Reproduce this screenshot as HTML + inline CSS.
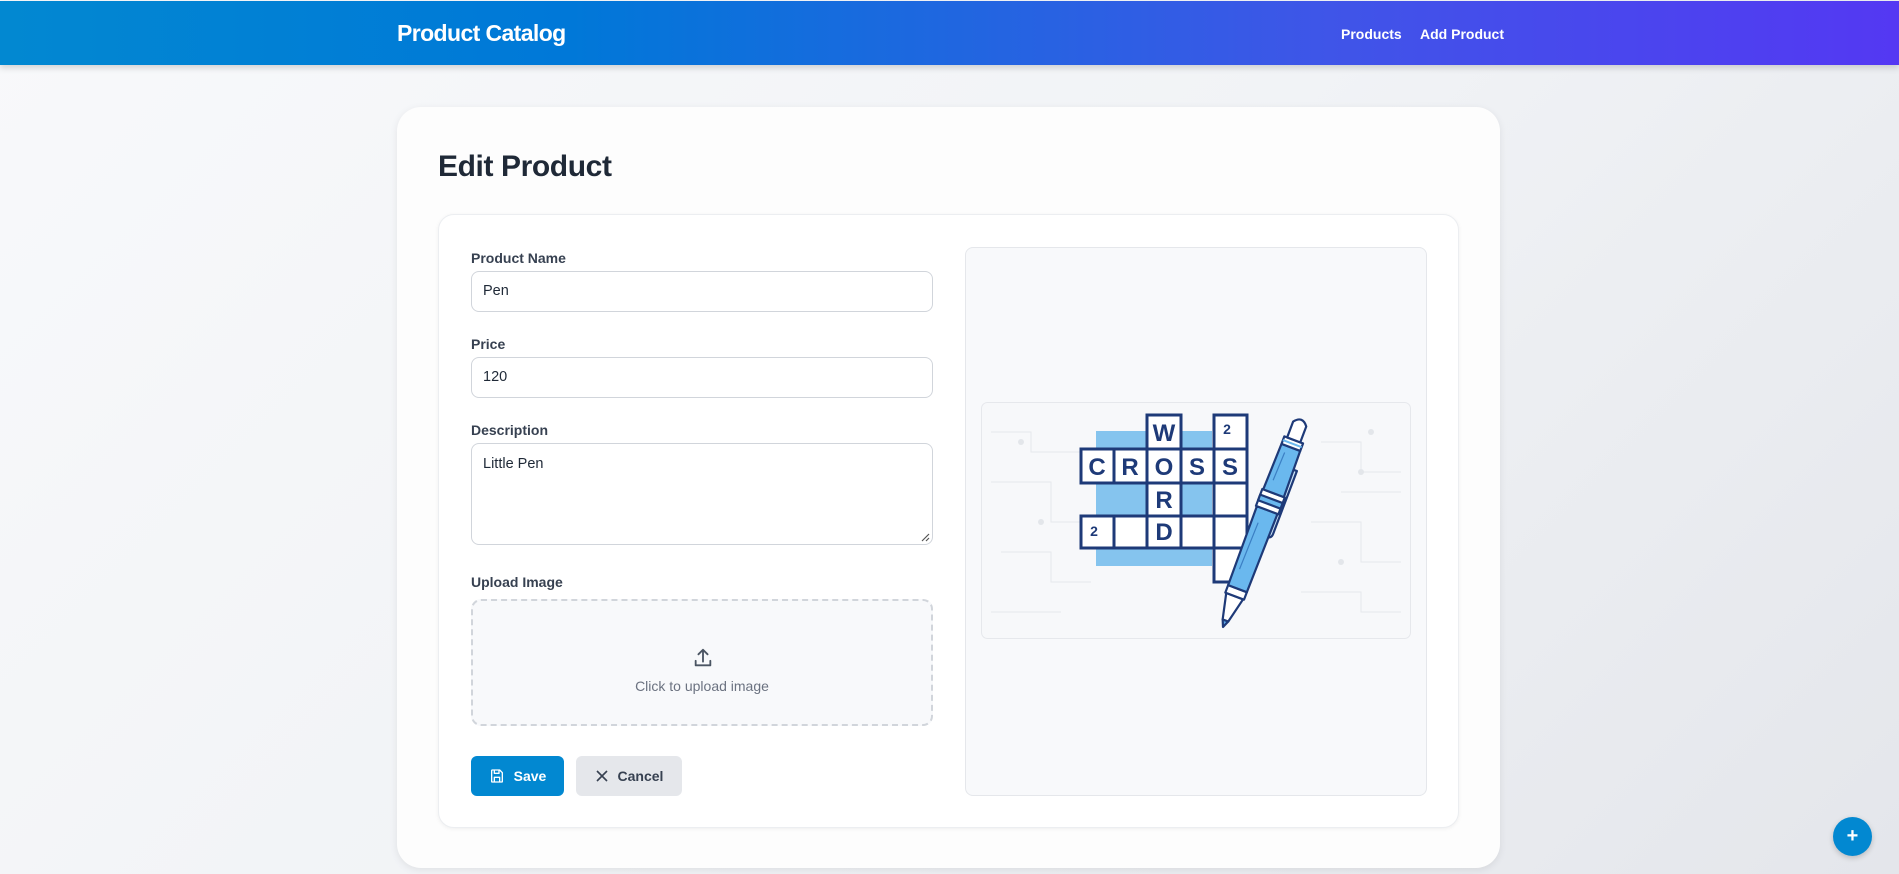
<!DOCTYPE html>
<html><head><meta charset="utf-8">
<style>
*{box-sizing:border-box;margin:0;padding:0}
html,body{width:1899px;height:874px;overflow:hidden}
body{font-family:"Liberation Sans",sans-serif;background:linear-gradient(135deg,#f8f9fb 0%,#f1f3f6 50%,#e4e6eb 100%);position:relative;color:#1f2937}
.hdr{position:absolute;left:0;top:1px;width:1899px;height:64px;background:linear-gradient(90deg,#0288d1 0%,#0078d8 30%,#3f55e8 70%,#5438f3 100%);box-shadow:0 3px 6px rgba(0,0,0,.15)}
.hdr .t{position:absolute;left:397px;top:19px;color:#fff;font-weight:bold;font-size:23px;letter-spacing:-.6px}
.hdr .n{position:absolute;top:25px;color:#fff;font-weight:bold;font-size:14px}
.card{position:absolute;left:397px;top:107px;width:1103px;height:761px;background:#fdfdfd;border-radius:24px;box-shadow:0 2px 8px rgba(0,0,0,.08)}
h1{position:absolute;left:438px;top:150px;font-size:30px;font-weight:bold;color:#1f2937;letter-spacing:-.4px}
.inner{position:absolute;left:438px;top:214px;width:1021px;height:614px;background:#fff;border-radius:16px;border:1px solid #eceef1;box-shadow:0 1px 4px rgba(0,0,0,.06)}
.lbl{position:absolute;left:471px;font-size:14px;font-weight:bold;color:#374151}
.inp{position:absolute;left:471px;width:462px;border:1px solid #d1d5db;border-radius:8px;background:#fff;font-size:14.5px;color:#1f2937;padding-left:11px}
.drop{position:absolute;left:471px;top:599px;width:462px;height:127px;border:2px dashed #d1d5db;border-radius:10px;background:#f8f9fb}
.btn{position:absolute;top:756px;height:40px;border-radius:6px;font-size:14px;font-weight:bold;display:flex;align-items:center;justify-content:center;gap:9px}
.prev{position:absolute;left:965px;top:247px;width:462px;height:549px;background:#f8f9fb;border:1px solid #e5e7eb;border-radius:8px}
.fab{position:absolute;left:1833px;top:817px;width:39px;height:39px;border-radius:50%;background:#0288d1;color:#fff;font-size:20px;font-weight:bold;text-align:center;line-height:39px;box-shadow:0 2px 6px rgba(0,0,0,.2)}
</style></head><body>
<div class="hdr"><div class="t">Product Catalog</div><div class="n" style="left:1341px">Products</div><div class="n" style="left:1420px">Add Product</div></div>
<div class="card"></div>
<h1>Edit Product</h1>
<div class="inner"></div>
<div class="lbl" style="top:250px">Product Name</div>
<div class="inp" style="top:271px;height:41px;line-height:39px">Pen</div>
<div class="lbl" style="top:336px">Price</div>
<div class="inp" style="top:357px;height:41px;line-height:39px">120</div>
<div class="lbl" style="top:422px">Description</div>
<div class="inp" style="top:443px;height:102px;padding-top:12px">Little Pen
<svg style="position:absolute;right:2px;bottom:2px" width="10" height="10"><path d="M9 2L2 9M9 6L6 9" stroke="#555" stroke-width="1.2"/></svg></div>
<div class="lbl" style="top:574px">Upload Image</div>
<div class="drop">
<svg style="position:absolute;left:219px;top:46px" width="22" height="22" viewBox="0 0 24 24" fill="none" stroke="#4b5563" stroke-width="2" stroke-linecap="round" stroke-linejoin="round"><path d="M4 15v5h16v-5M12 16V3M7 8l5-5 5 5"/></svg>
<div style="position:absolute;left:0;right:0;top:77px;text-align:center;font-size:14px;color:#6b7280">Click to upload image</div>
</div>
<div class="btn" style="left:471px;width:93px;background:#0288d1;color:#fff">
<svg width="16" height="16" viewBox="0 0 24 24" fill="none" stroke="#fff" stroke-width="2" stroke-linejoin="round"><path d="M5 3h11l4 4v13a1 1 0 0 1-1 1H5a1 1 0 0 1-1-1V4a1 1 0 0 1 1-1z"/><path d="M8 3v5h7V3M8 21v-7h8v7"/></svg>Save</div>
<div class="btn" style="left:576px;width:106px;background:#e5e7eb;color:#374151">
<svg width="14" height="14" viewBox="0 0 14 14" stroke="#374151" stroke-width="1.6"><path d="M2 2l10 10M12 2L2 12"/></svg>Cancel</div>
<div class="prev"></div>
<svg style="position:absolute;left:981px;top:402px" width="430" height="237" viewBox="0 0 430 237">
<rect x="0.5" y="0.5" width="429" height="236" rx="6" fill="#f7f8fa" stroke="#e6e8ec"/>
<g stroke="#e6e8ec" fill="none" stroke-width="1">
<path d="M10 30h40v20h60M10 80h60v40h30M20 150h50v30h40M10 210h70M340 40h40v30h40M330 120h50v40h40M320 190h60v20h40M360 90h60"/>
</g>
<g fill="#e3e6ea"><circle cx="40" cy="40" r="3"/><circle cx="60" cy="120" r="3"/><circle cx="380" cy="70" r="3"/><circle cx="360" cy="160" r="3"/><circle cx="390" cy="30" r="3"/></g>
<rect x="115" y="29" width="116" height="135" fill="#85c4ee"/>
<g fill="#fff" stroke="#1e3a78" stroke-width="3">
<rect x="166" y="13" width="34" height="34"/><rect x="233" y="13" width="33" height="34"/>
<rect x="100" y="47" width="33" height="34"/><rect x="133" y="47" width="33" height="34"/><rect x="166" y="47" width="34" height="34"/><rect x="200" y="47" width="33" height="34"/><rect x="233" y="47" width="33" height="34"/>
<rect x="166" y="81" width="34" height="33"/><rect x="233" y="81" width="33" height="33"/>
<rect x="100" y="114" width="33" height="32"/><rect x="133" y="114" width="33" height="32"/><rect x="166" y="114" width="34" height="32"/><rect x="200" y="114" width="33" height="32"/><rect x="233" y="114" width="33" height="32"/>
<rect x="233" y="146" width="33" height="34"/>
</g>
<g fill="#1e3a78" font-family="Liberation Sans,sans-serif" font-weight="bold" font-size="24" text-anchor="middle">
<text x="183" y="39">W</text><text x="116" y="73">C</text><text x="149" y="73">R</text><text x="183" y="73">O</text><text x="216" y="73">S</text><text x="249" y="73">S</text>
<text x="183" y="106">R</text><text x="183" y="138">D</text>
<text x="246" y="32" font-size="14">2</text><text x="113" y="134" font-size="14">2</text>
</g>
<g transform="translate(242 225) rotate(20.7)" stroke="#1e3a78" stroke-width="2.2" stroke-linejoin="round">
<path d="M9 -172H14V-105Q14 -100 10 -100" fill="#cfe6f8"/>
<path d="M-3 -7L0 0L3 -7Z" fill="#5aa6e6"/>
<path d="M-9 -33L-3 -7H3L9 -33Z" fill="#fff"/>
<rect x="-10" y="-41" width="20" height="8" fill="#fff"/>
<path d="M-10 -41L-11 -125H11L10 -41Z" fill="#6ab8ee"/>
<rect x="-12" y="-143" width="24" height="18" fill="#fff"/>
<rect x="-12" y="-137" width="24" height="6" fill="#6ab8ee"/>
<path d="M-11 -143L-10 -192H10L11 -143Z" fill="#6ab8ee"/>
<rect x="-10" y="-200" width="20" height="8" fill="#fff"/>
<rect x="-10" y="-197" width="20" height="2" fill="#6ab8ee" stroke="none"/>
<path d="M-7 -200V-217Q0 -226 7 -217V-200Z" fill="#fff"/>
<path d="M-4 -110L-5 -60" stroke="#3b7fc4" stroke-width="1.2"/>
<path d="M-4 -185L-5 -155" stroke="#3b7fc4" stroke-width="1.2"/>
</g>
</svg>
<div class="fab">+</div>
</body></html>
